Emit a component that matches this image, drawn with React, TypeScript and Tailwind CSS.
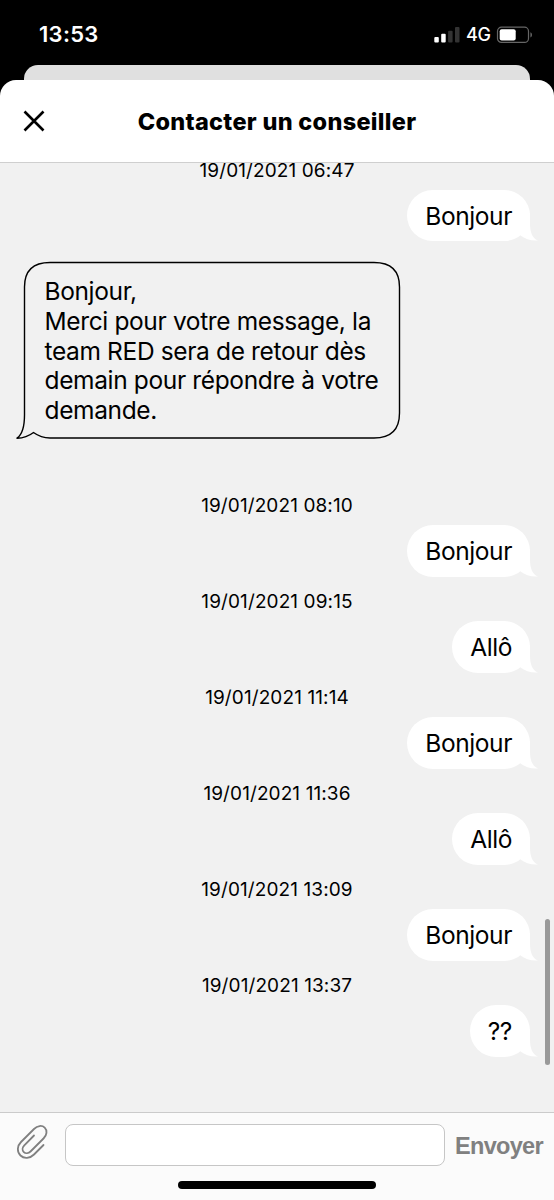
import type { ReactNode } from 'react';

interface Message {
  id: number;
  date: string;
  text: string;
  reply?: string[];
}

const messages: Message[] = [
  {
    id: 1,
    date: '19/01/2021 06:47',
    text: 'Bonjour',
    reply: [
      'Bonjour,',
      'Merci pour votre message, la',
      'team RED sera de retour dès',
      'demain pour répondre à votre',
      'demande.',
    ],
  },
  { id: 2, date: '19/01/2021 08:10', text: 'Bonjour' },
  { id: 3, date: '19/01/2021 09:15', text: 'Allô' },
  { id: 4, date: '19/01/2021 11:14', text: 'Bonjour' },
  { id: 5, date: '19/01/2021 11:36', text: 'Allô' },
  { id: 6, date: '19/01/2021 13:09', text: 'Bonjour' },
  { id: 7, date: '19/01/2021 13:37', text: '??' },
];

function StatusBar() {
  return (
    <div className="flex h-[65px] items-start justify-between pl-[39px] pr-[21px] pt-[22px] text-white">
      <span className="text-[22px] font-semibold leading-[25px] tracking-[0.3px]">13:53</span>
      <div className="flex h-[25px] items-center">
        <svg width="26" height="16" viewBox="0 0 26 16" fill="#fff">
          <rect x="0.3" y="10" width="4.5" height="5.6" rx="1" />
          <rect x="7.2" y="6.7" width="4.5" height="8.9" rx="1" />
          <rect x="14.1" y="3.7" width="4.5" height="11.9" rx="1" fill="#333" />
          <rect x="21" y="0" width="4.5" height="15.6" rx="1" fill="#333" />
        </svg>
        <span className="ml-[6px] w-[25px] text-[18px] font-medium leading-[25px] tracking-[-0.4px]">4G</span>
        <svg className="ml-[5px]" width="37" height="18" viewBox="0 0 37 18" fill="none">
          <rect x="1.5" y="1.2" width="31" height="15.2" rx="4" stroke="#666" strokeWidth="1.2" />
          <rect x="3.7" y="3.2" width="16" height="11.2" rx="2" fill="#fff" />
          <path d="M34.5 6.200c1.800.8 1.800 4.400 0 5.200z" fill="#777" />
        </svg>
      </div>
    </div>
  );
}

function UserBubble({ children }: { children: ReactNode }) {
  return (
    <div className="relative mr-[24px] h-[51.5px] self-end rounded-[26px] bg-white px-[18px] text-[24.5px] leading-[52px] tracking-[-0.4px]">
      {children}
      <svg className="absolute -right-2 bottom-0" width="26" height="28" viewBox="0 0 26 28" fill="#fff">
        <path d="M18 0V10C18 19 20 25 26 27.5C19 28 13 26 8.500 22.500L2 10Z" />
      </svg>
    </div>
  );
}

function AgentBubble({ lines }: { lines: string[] }) {
  return (
    <div className="relative ml-[23px] h-[178px] w-[378px] pl-[21.5px] pt-[16px] text-[24.5px] leading-[29.8px]">
      <svg className="absolute -left-2 top-0" width="386" height="178" viewBox="0 0 386 178" fill="none">
        <path
          d="M9.5 154V26Q9.5 1.5 35 1.5H359Q384.500 1.500 384.500 26V152Q384.500 177 359 177H35Q26 177 18.500 171.500Q11.500 177 2 177.200Q9.500 172 9.500 154Z"
          stroke="#000"
          strokeWidth="1.4"
          strokeLinejoin="round"
        />
      </svg>
      {lines.map(line => (
        <p key={line} className="whitespace-nowrap tracking-[-0.36px]">
          {line}
        </p>
      ))}
    </div>
  );
}

export default function App() {
  return (
    <div className="flex h-[1200px] w-[554px] flex-col overflow-hidden bg-black font-['Inter',sans-serif] text-black">
      <StatusBar />
      <div className="mx-6 h-[15px] shrink-0 rounded-t-[14px] bg-[#e0e0e0]" />

      <div className="flex min-h-0 flex-1 flex-col overflow-hidden rounded-t-[16px] bg-white">
        <header className="grid h-[83px] shrink-0 grid-cols-[68px_1fr_68px] items-center border-b border-[#cfcfcf]">
          <button className="flex justify-center" aria-label="Fermer">
            <svg width="22" height="22" viewBox="0 0 22 22" stroke="#000" strokeWidth="2.6">
              <path d="M1.500 1.500L20.500 20.500M20.500 1.500L1.500 20.500" />
            </svg>
          </button>
          <h1 className="whitespace-nowrap pt-[2px] text-center text-[23.5px] font-extrabold leading-[30px] tracking-[0.3px]">
            Contacter un conseiller
          </h1>
        </header>

        <main className="relative min-h-0 flex-1 overflow-hidden bg-[#f1f1f1]">
          <div className="-mt-[5.5px] flex flex-col">
            {messages.map(message => (
              <section key={message.id} className="mb-[12.5px] flex flex-col">
                <time className="mb-[6.500px] h-[25.500px] text-center text-[19px] leading-[26px] tracking-[0.1px]">
                  {message.date}
                </time>
                <UserBubble>{message.text}</UserBubble>
                {message.reply && (
                  <div className="mb-[41.500px] mt-5">
                    <AgentBubble lines={message.reply} />
                  </div>
                )}
              </section>
            ))}
          </div>
          <div className="absolute right-[4px] top-[756px] h-[146px] w-[5px] rounded-full bg-[#999]" />
        </main>

        <footer className="h-[88px] shrink-0 border-t border-[#cbcbcb] bg-[#fbfbfb]">
          <div className="flex h-[68px] items-start pt-[11px]">
            <svg className="ml-4 shrink-0" width="32" height="36" viewBox="0 0 32 36" fill="none" stroke="#808080" strokeWidth="1.800" strokeLinecap="round">
              <path d="M27.500 21L18 30.500C14 34.500 8 35 4.500 31.500C.8 27.800 1 22 5 18L18 5C21.500 1.500 26 1 28.700 3.700C31.500 6.500 31 11 27.500 14.500L14.500 27.500C12.500 29.500 9.500 29.800 7.800 28.100C6 26.300 6.200 23.500 8.300 21.400L18 11.500" />
            </svg>
            <input
              className="ml-[17px] h-[42px] w-[380px] rounded-[8px] border border-[#c6c6c6] bg-white px-3 outline-none"
              aria-label="Message"
            />
            <button className="ml-[10px] mt-[7px] font-['Liberation_Sans',sans-serif] text-[23.500px] font-bold leading-[30px] tracking-[-0.7px] text-[#808080]">
              Envoyer
            </button>
          </div>
          <div className="mx-auto h-[8px] w-[198px] rounded-full bg-black" />
        </footer>
      </div>
    </div>
  );
}
